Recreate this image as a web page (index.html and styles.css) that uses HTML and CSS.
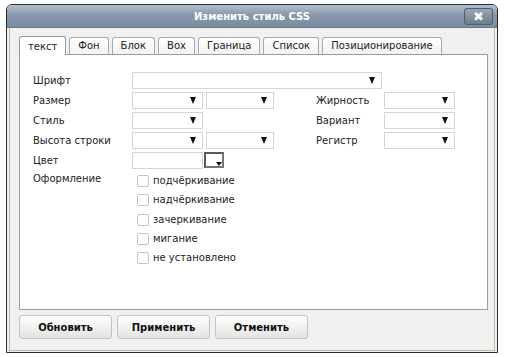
FILE: index.html
```html
<!DOCTYPE html>
<html lang="ru">
<head>
    <meta charset="UTF-8">
    <meta name="viewport" content="width=device-width, initial-scale=1.0">
    <link rel="stylesheet" href="styles.css">
</head>
<body>
    <div class="window">
        <!-- заголовок окна -->
        <div class="titlebar">
            <span></span>
            <span class="title">Изменить стиль CSS</span>
            <button class="close">&#10006;</button>
        </div>

        <div class="frame">
            <!-- вкладки -->
            <ul class="tabs">
                <li class="active">текст</li>
                <li>Фон</li>
                <li>Блок</li>
                <li>Вох</li>
                <li>Граница</li>
                <li>Список</li>
                <li>Позиционирование</li>
            </ul>

            <!-- панель вкладки "текст" -->
            <div class="panel">
                <div class="form">
                    <label>Шрифт</label>
                    <div class="select wide"></div>

                    <label>Размер</label>
                    <div class="select"></div>
                    <div class="select short"></div>
                    <label class="col4">Жирность</label>
                    <div class="select"></div>

                    <label>Стиль</label>
                    <div class="select"></div>
                    <label class="col4">Вариант</label>
                    <div class="select"></div>

                    <label>Высота строки</label>
                    <div class="select"></div>
                    <div class="select short"></div>
                    <label class="col4">Регистр</label>
                    <div class="select"></div>

                    <label>Цвет</label>
                    <div class="color-field">
                        <div class="text-input"></div>
                        <div class="picker"></div>
                    </div>

                    <label class="top">Оформление</label>
                    <ul class="checks">
                        <li><span class="box"></span>подчёркивание</li>
                        <li><span class="box"></span>надчёркивание</li>
                        <li><span class="box"></span>зачеркивание</li>
                        <li><span class="box"></span>мигание</li>
                        <li><span class="box"></span>не установлено</li>
                    </ul>
                </div>
            </div>

            <!-- кнопки -->
            <div class="buttons">
                <button>Обновить</button>
                <button>Применить</button>
                <button>Отменить</button>
            </div>
        </div>
    </div>
</body>
</html>
```

FILE: styles.css
```css
/* общие стили */
body {
    margin: 0;
    background: #ffffff;
    font-family: "DejaVu Sans", Verdana, sans-serif;
    font-size: 10px;
    color: #222;
}

ul {
    list-style: none;
    margin: 0;
    padding: 0;
}

/* окно */
.window {
    margin: 4px 0 0 6px;
    width: 490px;
    height: 347px;
    border: 1px solid #2b2b2b;
    border-radius: 6px 6px 0 0;
    background: #f0f0f0;
    display: flex;
    flex-direction: column;
    overflow: hidden;
}

.titlebar {
    height: 22px;
    flex-shrink: 0;
    display: grid;
    grid-template-columns: 1fr auto 1fr;
    align-items: center;
    background: linear-gradient(#b3c0cd, #8798aa 45%, #7a8da1);
    border-bottom: 1px solid #667a8d;
}

.title {
    color: #fff;
    font-weight: bold;
    font-size: 10px;
}

.close {
    justify-self: end;
    margin-right: 4px;
    width: 29px;
    height: 17px;
    padding: 0;
    border: 1px solid #4d5d6c;
    border-radius: 3px;
    background: linear-gradient(#98a7b5, #6b7c8c);
    color: #fff;
    font-family: "DejaVu Sans", sans-serif;
    font-size: 13px;
    font-weight: bold;
    line-height: 15px;
}

/* рамка содержимого */
.frame {
    flex: 1;
    margin: 0 2px 1px 2px;
    border: 1px solid #c6b5a4;
    border-top: none;
    padding: 8px 6px 11px 9px;
    display: flex;
    flex-direction: column;
}

/* вкладки */
.tabs {
    display: flex;
    align-items: flex-end;
    gap: 3px;
    height: 18px;
    position: relative;
    z-index: 1;
}

.tabs li {
    height: 16px;
    line-height: 16px;
    padding: 0 8px;
    border: 1px solid #a3abb3;
    border-bottom: none;
    border-radius: 3px 3px 0 0;
    background: linear-gradient(#ffffff, #f2f2f2);
    color: #222;
}

.tabs li.active {
    height: 18px;
    line-height: 19px;
    background: #ffffff;
    border-color: #8f9aa6;
    margin-bottom: -1px;
}

.panel {
    flex: 1;
    background: #fff;
    border: 1px solid #9c9c9c;
    padding: 15px 0 0 13px;
}

/* форма */
.form {
    display: grid;
    grid-template-columns: 99px 74px 110px 68px 69px;
    grid-auto-rows: 20px;
    align-items: center;
}

.form label {
    grid-column: 1;
}

.form label.col4 {
    grid-column: 4;
}

.form label.top {
    align-self: start;
    padding-top: 3px;
}

.select {
    position: relative;
    width: 69px;
    height: 15px;
    border: 1px solid #d6d6d6;
    background: #fff;
}

.select::after {
    content: "";
    position: absolute;
    right: 6px;
    top: 4px;
    border-left: 3.5px solid transparent;
    border-right: 3.5px solid transparent;
    border-top: 7px solid #111;
}

.select.wide {
    grid-column: 2 / 5;
    width: 248px;
}

.select.short {
    width: 66px;
}

.color-field {
    grid-column: 2 / 4;
    display: flex;
    align-items: center;
    gap: 1px;
}

.text-input {
    width: 69px;
    height: 15px;
    border: 1px solid #d6d6d6;
}

.picker {
    position: relative;
    width: 16px;
    height: 12px;
    border: 2px solid #5a5a5a;
    border-right-color: #777;
    border-bottom-color: #777;
    background: #fff;
}

.picker::after {
    content: "";
    position: absolute;
    right: 0;
    bottom: 0;
    border-left: 3px solid transparent;
    border-right: 3px solid transparent;
    border-top: 4px solid #111;
}

.checks {
    grid-column: 2 / 5;
    grid-row: span 5;
    align-self: start;
    padding: 5px 0 0 5px;
}

.checks li {
    height: 19.3px;
    display: flex;
    align-items: flex-start;
    gap: 4px;
}

.box {
    width: 10px;
    height: 10px;
    border: 1px solid #c4c4c4;
    border-radius: 2px;
    background: #fff;
    flex-shrink: 0;
}

/* кнопки */
.buttons {
    display: flex;
    gap: 5px;
    margin-top: 5px;
}

.buttons button {
    width: 93px;
    height: 24px;
    border: 1px solid #c3c3c3;
    border-radius: 3px;
    background: linear-gradient(#ffffff, #e3e3e3);
    font-family: "DejaVu Sans", Verdana, sans-serif;
    font-size: 10px;
    font-weight: bold;
    color: #111;
}
```
